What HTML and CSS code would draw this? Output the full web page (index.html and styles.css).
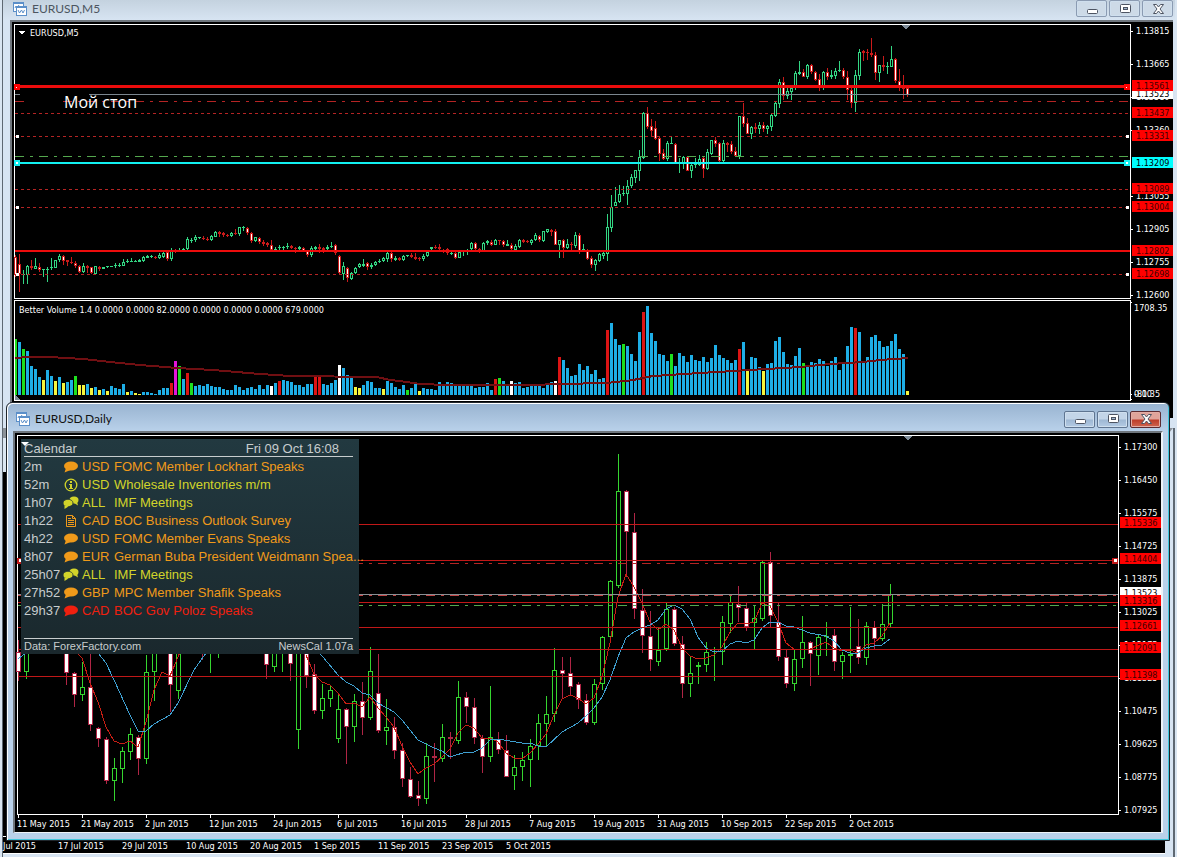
FILE: index.html
```html
<!DOCTYPE html>
<html lang="en">
<head>
    <meta charset="utf-8">
    <title>EURUSD</title>
    <link rel="stylesheet" href="styles.css">
</head>
<body>
    <svg class="defs" width="0" height="0" aria-hidden="true">
        <symbol id="icon-chart" viewBox="0 0 14 14">
            <rect x="0.5" y="0.5" width="10" height="9" fill="#fff" stroke="#5b8fc9"/>
            <path d="M0 1.5h11" stroke="#5b8fc9"/>
            <path d="M2 6l1-2 1 2 2-3" fill="none" stroke="#5b8fc9"/>
            <rect x="3.5" y="4.5" width="10" height="9" fill="#fff" stroke="#5b8fc9"/>
            <path d="M3 5.5h11" stroke="#5b8fc9"/>
            <path d="M5 8l1.500 3 2-3 1.500 3 1.500-3" fill="none" stroke="#5b8fc9"/>
        </symbol>
        <symbol id="icon-min" viewBox="0 0 14 12">
            <rect x="2.500" y="6.500" width="10" height="4" rx="1" fill="#fff" stroke="#4d5462"/>
        </symbol>
        <symbol id="icon-max" viewBox="0 0 14 12">
            <rect x="2.500" y="1.500" width="10" height="8" rx="1" fill="#fff" stroke="#4d5462"/>
            <rect x="5.500" y="4.500" width="4" height="2" fill="#9fb4cc" stroke="#4d5462"/>
        </symbol>
        <symbol id="icon-close" viewBox="0 0 14 12">
            <path d="M2.500 1.500h3l2 2.500 2-2.500h3l-3.500 4.500 3.500 4.500h-3l-2-2.500-2 2.500h-3l3.500-4.500z" fill="#fff" stroke="#4d5462"/>
        </symbol>
        <symbol id="icon-speech" viewBox="0 0 16 14">
            <ellipse cx="8" cy="6" rx="7" ry="4.500" fill="currentColor"/>
            <path d="M3 8l-1.500 4.500 6-2.500z" fill="currentColor"/>
        </symbol>
        <symbol id="icon-meeting" viewBox="0 0 16 14">
            <ellipse cx="11" cy="4" rx="4.500" ry="3.500" fill="currentColor"/>
            <path d="M11 7l4 2.500-1-4z" fill="currentColor"/>
            <ellipse cx="5" cy="7" rx="5" ry="3.700" fill="currentColor" stroke="#1f3238" stroke-width="0.800"/>
            <path d="M1.500 9l0 4 4-2.500z" fill="currentColor"/>
        </symbol>
        <symbol id="icon-info" viewBox="0 0 16 14">
            <circle cx="8" cy="7" r="5.800" fill="none" stroke="currentColor" stroke-width="1.300"/>
            <path d="M7 3h2v2h-2zM6 6h3v4h1v1h-4v-1h1v-3h-1z" fill="currentColor"/>
        </symbol>
        <symbol id="icon-report" viewBox="0 0 16 14">
            <path d="M3.500 1.500h6l3 3v8h-9zM9.500 1.500v3h3M5 4.500h3M5 6.500h6M5 8.500h6M5 10.500h6" fill="none" stroke="currentColor"/>
        </symbol>
    </svg>

    <section class="window window-back">
        <ul class="dates">
            <li>Jul 2015</li>
            <li>17 Jul 2015</li>
            <li>29 Jul 2015</li>
            <li>10 Aug 2015</li>
            <li>20 Aug 2015</li>
            <li>1 Sep 2015</li>
            <li>11 Sep 2015</li>
            <li>23 Sep 2015</li>
            <li>5 Oct 2015</li>
        </ul>
    </section>

    <section class="window window-m5">
        <header class="titlebar">
            <svg class="app-icon"><use href="#icon-chart"/></svg>
            <h2>EURUSD,M5</h2>
            <div class="buttons">
                <button type="button" aria-label="Minimize"><svg><use href="#icon-min"/></svg></button>
                <button type="button" aria-label="Maximize"><svg><use href="#icon-max"/></svg></button>
                <button type="button" aria-label="Close"><svg><use href="#icon-close"/></svg></button>
            </div>
        </header>
        <div class="client">
            <div class="row row-price">
                <svg class="plot" id="m5-plot"></svg>
                <svg class="axis" id="m5-axis"></svg>
            </div>
            <div class="row row-volume">
                <svg class="plot" id="volume-plot"></svg>
                <svg class="axis" id="volume-axis"></svg>
            </div>
        </div>
    </section>

    <section class="window window-daily">
        <header class="titlebar">
            <svg class="app-icon"><use href="#icon-chart"/></svg>
            <h2>EURUSD,Daily</h2>
            <div class="buttons">
                <button type="button" aria-label="Minimize"><svg><use href="#icon-min"/></svg></button>
                <button type="button" aria-label="Maximize"><svg><use href="#icon-max"/></svg></button>
                <button type="button" class="close" aria-label="Close"><svg><use href="#icon-close"/></svg></button>
            </div>
        </header>
        <div class="client">
            <div class="row row-daily">
                <svg class="plot" id="daily-plot"></svg>
                <svg class="axis" id="daily-axis"></svg>
                <div class="calendar">
                    <div class="calendar-head"><span>Calendar</span><time>Fri 09 Oct 16:08</time></div>
                    <table>
                        <tr class="medium"><td>2m</td><td><svg><use href="#icon-speech"/></svg></td><td>USD</td><td>FOMC Member Lockhart Speaks</td></tr>
                        <tr class="low"><td>52m</td><td><svg><use href="#icon-info"/></svg></td><td>USD</td><td>Wholesale Inventories m/m</td></tr>
                        <tr class="low"><td>1h07</td><td><svg><use href="#icon-meeting"/></svg></td><td>ALL</td><td>IMF Meetings</td></tr>
                        <tr class="medium"><td>1h22</td><td><svg><use href="#icon-report"/></svg></td><td>CAD</td><td>BOC Business Outlook Survey</td></tr>
                        <tr class="medium"><td>4h22</td><td><svg><use href="#icon-speech"/></svg></td><td>USD</td><td>FOMC Member Evans Speaks</td></tr>
                        <tr class="medium"><td>8h07</td><td><svg><use href="#icon-speech"/></svg></td><td>EUR</td><td>German Buba President Weidmann Spea...</td></tr>
                        <tr class="low"><td>25h07</td><td><svg><use href="#icon-meeting"/></svg></td><td>ALL</td><td>IMF Meetings</td></tr>
                        <tr class="medium"><td>27h52</td><td><svg><use href="#icon-speech"/></svg></td><td>GBP</td><td>MPC Member Shafik Speaks</td></tr>
                        <tr class="high"><td>29h37</td><td><svg><use href="#icon-speech"/></svg></td><td>CAD</td><td>BOC Gov Poloz Speaks</td></tr>
                    </table>
                    <div class="calendar-foot"><span>Data: ForexFactory.com</span><span>NewsCal 1.07a</span></div>
                </div>
            </div>
            <ul class="dates">
                <li>11 May 2015</li>
                <li>21 May 2015</li>
                <li>2 Jun 2015</li>
                <li>12 Jun 2015</li>
                <li>24 Jun 2015</li>
                <li>6 Jul 2015</li>
                <li>16 Jul 2015</li>
                <li>28 Jul 2015</li>
                <li>7 Aug 2015</li>
                <li>19 Aug 2015</li>
                <li>31 Aug 2015</li>
                <li>10 Sep 2015</li>
                <li>22 Sep 2015</li>
                <li>2 Oct 2015</li>
            </ul>
        </div>
    </section>

    <script src="charts.js"></script>
</body>
</html>
```

FILE: styles.css
```css
* {
    box-sizing: border-box;
}

body {
    margin: 0;
    height: 100vh;
    position: relative;
    overflow: hidden;
    background: #d9e5f1;
    font-family: "DejaVu Sans Condensed", "DejaVu Sans", sans-serif;
    font-size: 9px;
}

body::before {
    content: "";
    position: absolute;
    inset: 0 2px 0 2px;
    background: #5e6872;
}

.defs {
    position: absolute;
}

/* windows */
.window {
    position: absolute;
    display: flex;
    flex-direction: column;
}

.window-m5 {
    top: 0;
    left: 3px;
    right: 2px;
    height: 428px;
    padding: 0 2px 10px 7px;
    background: #d7e4f2;
}

.window-daily {
    top: 402px;
    left: 6px;
    right: 7px;
    bottom: 16px;
    padding: 0 6px 7px;
    border: 1px solid #20262c;
    border-radius: 6px 6px 0 0;
    background: linear-gradient(#98b3d0, #b9d1ea 28px);
    box-shadow: inset 1px 1px #fff, inset -1px -1px #41c6dc;
}

.window-back {
    top: 428px;
    left: 3px;
    right: 4px;
    bottom: 0;
    justify-content: flex-end;
    border-top: 10px solid #8b9299;
    border-right: 8px solid #d7e4f2;
    border-bottom: 3px solid #d7e4f2;
    background: linear-gradient(#dbe7f2 34px, #000 34px);
}

.titlebar {
    display: flex;
    align-items: center;
    flex: none;
    height: 28px;
    padding-left: 3px;
}

.titlebar h2 {
    flex: 1;
    margin: 0 0 0 5px;
    font: 12px/16px Lato, sans-serif;
    color: #111;
}

.app-icon {
    width: 14px;
    height: 14px;
}

.window-daily .titlebar {
    padding: 4px 2px 0 3px;
}

.window-m5 .titlebar {
    height: 20px;
    margin: 0 -2px 0 -7px;
    padding: 0 2px 3px 10px;
    background: linear-gradient(#c4d2df, #d7e4f2);
}

.window-m5 .titlebar h2 {
    color: #4c5560;
}

.buttons {
    display: flex;
    gap: 2px;
}

.buttons button {
    display: flex;
    align-items: center;
    justify-content: center;
    width: 31px;
    height: 17px;
    padding: 0;
    border: 1px solid #5f7591;
    border-radius: 2px;
    background: linear-gradient(#c3d5e8 48%, #9db7d3 52%, #b4cbe4);
    box-shadow: inset 0 0 0 1px #cfdfee;
}

.window-m5 .buttons button {
    border-color: #8b9bb2;
    background: #cddae7;
}

.buttons .close {
    border-color: #5c2b31;
    background: linear-gradient(#e0a49a 48%, #bd3b28 52%, #cf6651);
    box-shadow: inset 0 0 0 1px #e2aca4;
}

.buttons svg {
    width: 14px;
    height: 12px;
}

.client {
    display: flex;
    flex-direction: column;
    flex: 1;
    min-height: 0;
    padding: 2px 0 0 2px;
    border-top: 2px solid #6f767d;
    border-left: 2px solid #6f767d;
    background: #000;
}

.window-daily .client {
    border-right: 2px solid #eef3f8;
    border-bottom: 1px solid #eef3f8;
}

/* charts */
.row {
    display: flex;
    position: relative;
}

.row-price {
    height: 275px;
}

.row-volume {
    height: 101px;
    margin-top: 1px;
}

.row-daily {
    flex: 1;
    min-height: 0;
}

.plot {
    flex: 1;
    min-width: 0;
    height: 100%;
    border: 1px solid #fff;
    overflow: visible;
}

.axis {
    flex: none;
    width: 42px;
    height: 100%;
    overflow: visible;
}

.plot,
.axis {
    shape-rendering: crispEdges;
}

.plot text,
.axis text {
    fill: #fff;
}

.plot .note {
    font: 16px "Open Sans", sans-serif;
}

.axis .tag-text {
    fill: #420000;
}

.axis .tag-text.dark {
    fill: #000;
}

.dates {
    display: flex;
    flex: none;
    height: 17px;
    margin: 0;
    padding: 0;
    list-style: none;
    color: #fff;
    line-height: 19px;
    white-space: nowrap;
}

.dates li {
    position: relative;
    flex: none;
    width: 64px;
}

.window-daily .dates li::before {
    content: "";
    position: absolute;
    left: 1px;
    top: 0;
    width: 1px;
    height: 3px;
    background: #fff;
}

.window-back .dates {
    height: 18px;
    border-top: 1px solid #fff;
    border-bottom: 1px solid #fff;
}

.window-back .dates li:first-child {
    width: 55px;
}

/* news calendar */
.calendar {
    position: absolute;
    top: 4px;
    left: 4px;
    width: 338px;
    height: 215px;
    padding: 0 6px 0 3px;
    background: linear-gradient(#223940, #1a282d);
    color: #c8cdce;
    font: 13px/18px "Liberation Sans", sans-serif;
}

.calendar::before {
    content: "";
    position: absolute;
    top: 3px;
    left: 0;
    border: 4px solid transparent;
    border-top-color: #fff;
    border-bottom: 0;
}

.calendar-head,
.calendar-foot {
    display: flex;
    justify-content: space-between;
}

.calendar-head {
    height: 18px;
    padding-right: 14px;
    margin-bottom: 1px;
    border-bottom: 1px solid #c8cdce;
    line-height: 19px;
}

.calendar table {
    table-layout: fixed;
    width: 100%;
    border-collapse: collapse;
}

.calendar td {
    height: 18px;
    padding: 0;
    white-space: nowrap;
}

.calendar td:nth-child(1) {
    width: 39px;
    color: #c8cdce;
}

.calendar td:nth-child(2) {
    width: 19px;
}

.calendar td:nth-child(3) {
    width: 32px;
}

.calendar td svg {
    display: block;
    width: 16px;
    height: 14px;
}

.calendar .medium {
    color: #f09a1a;
}

.calendar .low {
    color: #d2d42a;
}

.calendar .high {
    color: #f0200f;
}

.calendar-foot {
    margin-top: 18px;
    border-top: 1px solid #c8cdce;
    font-size: 11px;
    line-height: 15px;
}
```

FILE: charts.js
```js
const NS = 'http://www.w3.org/2000/svg';

function add(svg, name, attrs, text) {
    const el = document.createElementNS(NS, name);
    for (const key in attrs) el.setAttribute(key, attrs[key]);
    if (text) el.textContent = text;
    svg.appendChild(el);
    return el;
}

const $ = id => document.getElementById(id);

// candle rows: direction, high, body top, body bottom, low (three units per pixel, downwards)
const m5 = `
d 765 770 825 830,d 762 793 822 875,u 810 823 826 853,u 795 798 825 853,d 780 797 805 810,u 774 799 807 808
d 790 802 810 815,u 808 808 811 830,u 800 808 810 845,u 774 802 804 810,u 780 780 804 804,u 763 768 780 785
d 765 768 784 795,d 780 781 785 797,d 772 785 789 792,d 783 788 798 804,d 795 797 815 818,u 790 798 815 820
d 795 798 803 820,d 800 802 820 822,u 798 799 821 823,d 797 800 808 812,u 800 801 806 808,u 798 799 802 803
u 797 798 801 802,u 790 795 799 803,u 790 794 797 800,u 778 786 797 797,u 776 784 787 788,u 775 783 786 787
u 780 782 786 787,u 778 780 785 786,u 768 771 784 785,u 766 769 773 775,u 765 769 772 773,d 768 770 773 777
u 760 765 774 778,u 755 758 770 775,d 755 757 777 782,u 745 753 778 782,d 746 749 752 760,u 744 749 752 756
u 744 747 749 757,u 710 718 748 752,u 715 720 724 728,u 704 711 721 725,u 710 712 714 716,d 708 714 718 720
d 710 717 721 724,u 705 708 720 722,u 694 697 710 712,d 693 697 702 710,d 697 700 705 710,d 702 705 709 711
u 696 700 709 711,d 688 700 703 705,u 680 682 703 707,u 678 682 684 692,d 680 683 698 705,d 695 698 722 728
u 710 712 724 726,d 712 715 725 733,d 720 725 731 738,d 726 730 735 740,d 720 735 750 755,u 742 748 751 756
u 735 741 745 750,u 737 740 744 752,u 730 738 742 748,d 736 739 744 748,d 740 744 748 760,u 738 742 747 750
d 740 743 752 755,d 750 753 766 770,u 738 745 766 770,u 738 741 746 752,d 731 740 748 758,d 740 744 750 760
u 735 740 748 755,u 726 737 742 745,d 732 735 760 765,d 764 768 820 825,u 785 798 822 840,d 800 803 835 845
u 815 818 836 840,u 800 803 818 822,u 790 793 802 805,u 778 793 797 800,d 785 790 802 810,u 790 795 800 806
u 783 787 794 797,u 778 782 786 790,u 770 773 782 786,u 755 758 777 785,d 755 758 778 785,u 768 773 779 782
d 770 773 779 782,u 766 768 780 782,u 765 766 769 770,d 760 766 771 773,d 758 772 777 780,d 771 775 777 783
u 762 768 776 783,u 750 755 769 770,u 741 742 748 750,d 735 740 743 747,d 732 741 747 755,d 747 749 754 758
d 744 748 760 765,u 755 759 761 765,d 755 758 773 777,u 750 756 773 775,u 750 753 757 768,u 747 749 751 765
u 727 728 746 750,d 726 729 748 755,d 744 748 753 758,u 726 730 752 755,u 720 724 730 735,d 720 725 734 738
u 718 720 734 735,d 720 721 724 735,d 720 723 735 740,u 720 733 737 738,d 728 735 748 750,u 732 738 749 752
u 717 720 740 743,d 717 720 725 728,d 719 722 725 728,u 716 720 729 735,u 700 705 719 722,d 706 709 720 725
u 692 693 722 725,u 686 688 695 698,d 686 689 695 708,d 686 692 734 736,u 719 720 735 773,d 716 720 743 773
u 717 732 744 748,d 726 732 736 750,u 696 705 738 743,d 698 705 752 762,u 732 747 750 753,d 746 750 776 780
d 768 774 795 803,u 776 780 795 812,u 758 762 782 786,u 755 760 768 778,u 642 682 762 782,u 585 620 684 696
u 560 605 617 618,u 555 582 605 608,u 558 579 581 588,u 540 558 581 615,u 522 532 558 564,u 510 511 534 548
u 450 471 512 543,u 336 340 473 477,d 321 340 380 387,d 357 378 392 410,d 363 384 416 419,d 408 415 461 483
d 447 460 477 480,u 423 429 477 483,u 410 430 432 433,d 430 433 488 492,u 475 486 489 518,u 468 471 490 507
d 468 472 512 513,u 490 494 512 533,u 474 490 496 503,u 465 478 494 498,d 468 475 508 533,u 447 457 508 510
u 420 421 461 465,d 410 420 431 440,d 427 430 482 486,u 420 430 484 488,d 427 430 434 456,d 423 432 456 461
d 441 454 469 471,u 348 349 468 477,d 309 349 371 380,d 354 370 401 402,u 378 381 401 416,d 369 382 386 399
u 366 376 386 402,d 366 376 388 395,u 375 378 388 402,u 342 346 380 392,u 303 309 347 350,u 237 246 311 324
d 231 246 287 300,u 264 273 287 297,u 258 264 275 300,u 213 219 265 270,u 183 216 221 225,d 207 216 230 231
u 192 195 231 237,d 192 196 215 222,d 213 216 239 243,d 222 236 258 273,u 213 216 258 270,d 204 217 232 240
u 210 225 231 237,u 204 213 229 237,u 183 210 213 216,d 204 209 232 237,d 213 232 271 300,d 261 270 308 324
u 210 226 308 336,u 147 156 228 240,d 150 153 158 183,d 147 157 160 180,d 114 160 165 170,d 157 166 220 240
u 195 196 220 246,d 168 196 202 213,u 186 198 202 222,u 138 178 200 201,d 174 178 244 248,d 207 243 265 273
d 225 258 268 297,d 258 264 285 291`;

const daily = `
d 600 635 695 722,u 600 610 695 716,-,-,-,-,d 600 610 700 734,d 697 700 764 800,u 667 742 764 782,d 600 742 856 872
d 860 864 898 920,d 892 897 1022 1032,u 954 985 1022 1082,u 922 934 986 1028,u 864 883 935 960,d 885 892 958 1004
u 645 697 958 971,u 600 610 697 782,-,d 600 610 736 815,u 600 610 754 776,-,-,d 600 610 620 660,u 600 610 630 698
u 600 610 620 654,-,-,-,-,-,d 600 610 676 716,u 600 610 680 696,u 600 610 630 696,d 600 610 673 722
u 600 610 869 926,d 600 610 707 744,d 672 703 812 823,u 732 775 812 836,u 734 750 776 800,u 762 808 896 908
d 805 808 860 971,u 762 784 860 905,d 726 784 833 884,u 621 694 833 839,d 642 760 872 878,u 778 862 872 915
d 832 862 934 956,d 908 931 1018 1040,d 982 1018 1070 1073,d 1023 1066 1076 1097,u 910 949 1076 1091
d 910 949 954 1025,u 852 892 956 965,d 876 892 898 958,u 723 772 902 911,d 756 772 802 849,d 774 802 893 911
d 885 893 952 999,u 738 892 952 965,d 876 898 931 941,d 886 931 1012 1012,u 946 982 1009 1049,u 936 961 982 1022
u 898 919 961 1040,u 823 850 919 959,u 768 823 851 922,u 624 691 823 845,d 650 691 701 777,d 651 700 742 766
d 726 733 781 806,d 762 781 848 854,u 717 733 848 854,u 588 592 733 750,u 420 424 592 605,u 42 154 437 444
d 150 154 275 411,d 219 275 508 537,d 447 511 587 638,d 513 587 659 692,u 565 629 667 677,u 490 508 627 632
d 502 508 611 617,d 588 611 731 774,u 650 700 731 770,u 666 676 682 731,u 606 637 676 696,u 622 633 637 722
u 528 547 635 674,u 464 487 551 578,d 438 493 504 545,d 487 505 560 572,u 498 535 550 627,u 363 367 538 544
d 336 367 529 560,d 488 546 652 662,d 630 652 733 743,u 626 658 733 753,u 528 607 658 683,d 603 607 641 737
u 586 590 649 705,u 546 587 591 648,d 567 586 667 692,u 635 646 667 717,u 501 641 647 699,d 537 619 655 671
u 546 559 655 675,d 543 560 598 626,u 492 553 598 602,u 432 463 553 560`;

function drawCandles(svg, rows, o) {
    rows.trim().split(/[,\n]/).forEach((row, i) => {
        if (row === '-') return;
        const [dir, ...v] = row.split(' ');
        const [high, top, bottom, low] = v.map(n => Math.round(n / 3) + o.offset);
        const x = i * o.step;
        const half = (o.width - 1) / 2;
        const color = dir === 'u' ? o.up : o.down;
        const h = Math.max(bottom - top, 1);
        add(svg, 'rect', { x: x, y: high, width: 1, height: low - high, fill: color });
        add(svg, 'rect', { x: x - half, y: top, width: o.width, height: h, fill: color });
        if (h > 2) {
            add(svg, 'rect', {
                x: x - half + 1, y: top + 1, width: o.width - 2, height: h - 2,
                fill: dir === 'u' ? '#000' : '#fff'
            });
        }
    });
}

// filled rects, so that every line lands on whole pixels; dash is a list of on/off lengths
function hline(svg, y, color, height, dash) {
    const attrs = { x: 0, y: y, width: '100%', height: height, fill: color };
    if (dash) {
        const id = 'dash' + document.querySelectorAll('pattern').length;
        const period = dash.reduce((a, b) => a + b);
        const pattern = add(svg, 'pattern', { id: id, width: period, height: height, x: 0, y: y, patternUnits: 'userSpaceOnUse' });
        let x = 0;
        dash.forEach((len, i) => {
            if (i % 2 === 0) add(pattern, 'rect', { x: x, y: 0, width: len, height: height, fill: color });
            x += len;
        });
        attrs.fill = 'url(#' + id + ')';
    }
    add(svg, 'rect', attrs);
}

function handles(svg, y, color, core) {
    for (const [x, shift] of [[0, 'translate(-1 0)'], ['100%', 'translate(-6 0)']]) {
        add(svg, 'rect', { x: x, y: y - 3, width: 6, height: 6, fill: color, transform: shift });
        add(svg, 'rect', { x: x, y: y - core + 1, width: core, height: core, fill: '#fff', transform: shift + ' translate(2 0)' });
    }
}

function axisLabel(svg, y, text) {
    add(svg, 'rect', { x: 0, y: y, width: 2, height: 1, fill: '#fff' });
    add(svg, 'text', { x: 5, y: y + 3 }, text);
}

function tag(svg, y, text, color, cls) {
    add(svg, 'rect', { x: 1, y: y - 6, width: 41, height: 11, fill: color });
    add(svg, 'text', { x: 5, y: y + 3, class: 'tag-text ' + (cls || '') }, text);
}

const DASH = [3, 3];
const DASHDOT = [9, 6, 3, 6];

// M5 price chart
const p = $('m5-plot');
drawCandles(p, m5, { step: 4, width: 3, offset: -25, up: '#33d683', down: '#cc1a1a' });
hline(p, 69, '#7b868f', 1);
add(p, 'rect', { x: 5, y: 68, width: 69, height: 3, fill: '#000' });
hline(p, 76, '#b52424', 1, DASHDOT);
add(p, 'rect', { x: 9, y: 75, width: 38, height: 3, fill: '#000' });
[88, 111, 164, 182, 249].forEach(y => hline(p, y, '#b52424', 1, DASH));
hline(p, 131, '#54a84e', 1, DASHDOT);
hline(p, 60, '#ec0c0c', 3);
hline(p, 137, '#12f0f0', 2);
hline(p, 225, '#ec0c0c', 2);
handles(p, 62, '#f00', 1);
handles(p, 138, '#12f0f0', 2);
[112, 183, 250].forEach(y => handles(p, y, 'none', 3));
add(p, 'path', { d: 'M886 0h9l-4 5z', fill: '#7f8d99' });
add(p, 'path', { d: 'M3 6h7l-3 4z', fill: '#fff' });
add(p, 'text', { x: 15, y: 11 }, 'EURUSD,M5');
add(p, 'text', { x: 49, y: 83, class: 'note' }, 'Мой стоп');

const pa = $('m5-axis');
[[7, '1.13815'], [40, '1.13665'], [73, '1.13510'], [106, '1.13360'], [172, '1.13055'],
 [205, '1.12905'], [238, '1.12755'], [271, '1.12600']].forEach(a => axisLabel(pa, ...a));
tag(pa, 70, '1.13523', '#fff', 'dark');
[[62, '1.13561'], [89, '1.13437'], [112, '1.13331'], [165, '1.13089'], [183, '1.13004'],
 [227, '1.12802'], [250, '1.12698']].forEach(a => tag(pa, ...a, '#f00'));
tag(pa, 139, '1.13209', '#0ff', 'dark');

// volume: bar height (three units per pixel) and colour letter
const volume = `168g 159 138g 132 87 78 54 45y 75 57 42y 54 36y 39 45 57g 30y 30y 33 21y 24 15y 18 12y 27 21 18 33 9y 12 6y 3y
9 9 6 3 15 21 21 36r 102m 87g 48 66r 36g 27 30 27 33 27 24 24 18 15 15 30 24 15 21 24 18 30 18 30 27w 36 42r 45 42 39 30 30 24
33 33 54r 54r 33 30 36 45 90w 81 60 51 24y 21y 30 42 39 21 21 18y 42 36 24 18 30 15g 21 33 12y 21 18 18 15 39 30 39 36 27 27
27 27 27 21 24 24 36 15 48r 51g 42 30 42w 36 39 21 24 30 27 30 21 30 39 42w 114r 105 81 57 60 93 75 87 63 75 48 51 195r 216
168 150 153g 147 123 102 189 249r 267 186 162 123 120 102 123g 87 126 117 99 120 105 102 114 99 111 150 120 111 105 96 105
138r 159 72y 114 111 84 72y 93 96 162 174 129 93 90 117 141 96g 84 99 96 108 102 87 102 114 75 93 147 204 201r 189 99 114 174
180 162 144 147 162 183 138 123 12y`;
const volumeColors = { g: '#1ee01e', y: '#f6f63c', r: '#dc1414', m: '#e314d8', w: '#fff' };

const v = $('volume-plot');
volume.split(/\s+/).forEach((item, i) => {
    const h = Math.round(parseInt(item) / 3);
    add(v, 'rect', { x: i * 4 - (i ? 1 : 0), y: 94 - h, width: i ? 3 : 2, height: h, fill: volumeColors[item.slice(-1)] || '#1eaee6' });
});
add(v, 'polyline', {
    points: '0,57 12,56 35,56 68,58 95,61 125,64 162,67 198,69 245,73 275,75 362,76 375,79 385,80 405,83 432,84 515,84 545,83 592,82 618,79 638,75 685,72 735,69 785,66 815,63 848,61 865,59 893,57',
    fill: 'none', stroke: '#700f12', 'stroke-width': 2
});
add(v, 'path', { d: 'M0 94v5h5z', fill: '#7f8d99' });
add(v, 'text', { x: 4, y: 12 }, 'Better Volume 1.4 0.0000 0.0000 82.0000 0.0000 0.0000 0.0000 679.0000');

const va = $('volume-axis');
add(va, 'text', { x: 3, y: 11 }, '1708.35');
add(va, 'text', { x: 3, y: 97 }, '0.00');
add(va, 'text', { x: 3, y: 97 }, '-81.35');
[2, 94, 99].forEach(y => add(va, 'rect', { x: 0, y: y, width: 1, height: 1, fill: '#fff' }));

// daily chart
const d = $('daily-plot');
drawCandles(d, daily, { step: 8, width: 5, offset: 4, up: '#35d52f', down: '#b02545' });

const fast = [
    [[7.4, 640], [8, 655], [9, 730], [10, 785], [11, 860], [12, 903], [13, 913], [14, 904], [15, 920], [16, 845],
     [17, 750], [18, 697], [19, 708], [20, 650], [20.5, 620]],
    [[36, 645], [37, 703], [38, 727], [39, 734], [40, 760], [41, 792], [42, 789], [43, 801], [44, 770], [45, 805],
     [46, 830], [47, 862], [48, 918], [49, 965], [50, 1002], [51, 985], [52, 972], [53, 950], [54, 928], [55, 880],
     [56, 854], [57, 865], [58, 895], [59, 895], [60, 907], [61, 940], [62, 955], [63, 957], [64, 940], [65, 912],
     [66, 882], [67, 825], [68, 778], [69, 766], [70, 775], [71, 793], [72, 775], [73, 710], [74, 610], [75, 470],
     [76, 403], [77, 440], [78, 490], [79, 545], [80, 570], [81, 552], [82, 570], [83, 625], [84, 648], [85, 657],
     [86, 653], [87, 645], [88, 620], [89, 575], [90, 550], [91, 552], [92, 545], [93, 490], [94, 497], [95, 545],
     [96, 608], [97, 626], [99, 626], [101, 605], [102, 625], [103, 633], [104, 630], [105, 640], [106, 615],
     [107, 608], [108, 588], [109, 550]]
];
const slow = [
    [[0, 658], [1, 640]],
    [[10, 640], [11, 670], [12, 720], [14, 825], [15, 872], [16, 873], [17, 852], [19, 825], [20, 790], [22, 690], [23.5, 640]],
    [[37.8, 642], [40, 705], [41, 727], [42, 738], [43, 758], [44, 765], [45, 788], [47, 815], [48, 840], [50, 900],
     [52, 923], [53, 933], [54, 952], [56, 937], [57, 935], [58, 925], [59, 900], [60, 896], [63, 908], [64, 910],
     [65, 918], [66, 922], [68, 877], [70, 848], [71, 828], [72, 805], [73, 770], [74, 720], [75, 650], [76, 595],
     [77, 575], [78, 563], [79, 555], [80, 540], [81, 508], [82, 496], [83, 508], [84, 538], [85, 590], [86, 625],
     [87, 637], [88, 632], [89, 612], [90, 604], [91, 610], [92, 600], [93, 565], [94, 547], [95, 547], [96, 557],
     [97, 560], [99, 580], [101, 588], [102, 603], [103, 630], [104, 640], [105, 640], [106, 625], [107, 617],
     [108, 615], [109, 597]]
];

function average(lines, color) {
    lines.forEach(line => add(d, 'polyline', {
        points: line.map(([i, y]) => i * 8 + ',' + Math.round(y / 3 + 4)).join(' '),
        fill: 'none', stroke: color
    }));
}
average(fast, '#c81e14');
average(slow, '#3f9fd0');

hline(d, 158, '#8a8f94', 1);
hline(d, 127, '#b52424', 1, DASHDOT);
hline(d, 159, '#c04444', 1, DASHDOT);
hline(d, 169, '#54a84e', 1, DASHDOT);
[88, 124, 166, 191, 213, 240].forEach(y => hline(d, y, '#c01818', 1));
handles(d, 125, '#c01818', 3);
add(d, 'path', { d: 'M885 0h9l-4 5z', fill: '#7f8d99' });

const da = $('daily-axis');
[[12, '1.17300'], [45, '1.16450'], [78, '1.15575'], [111, '1.14725'], [144, '1.13875'], [177, '1.13025'],
 [210, '1.12175'], [243, '1.11325'], [276, '1.10475'], [309, '1.09625'], [342, '1.08775'], [375, '1.07925']
].forEach(a => axisLabel(da, ...a));
tag(da, 158, '1.13523', '#fff', 'dark');
[[88, '1.15336'], [124, '1.14404'], [166, '1.13316'], [191, '1.12661'], [213, '1.12091'], [240, '1.11398']]
    .forEach(a => tag(da, ...a, '#f00'));
```
